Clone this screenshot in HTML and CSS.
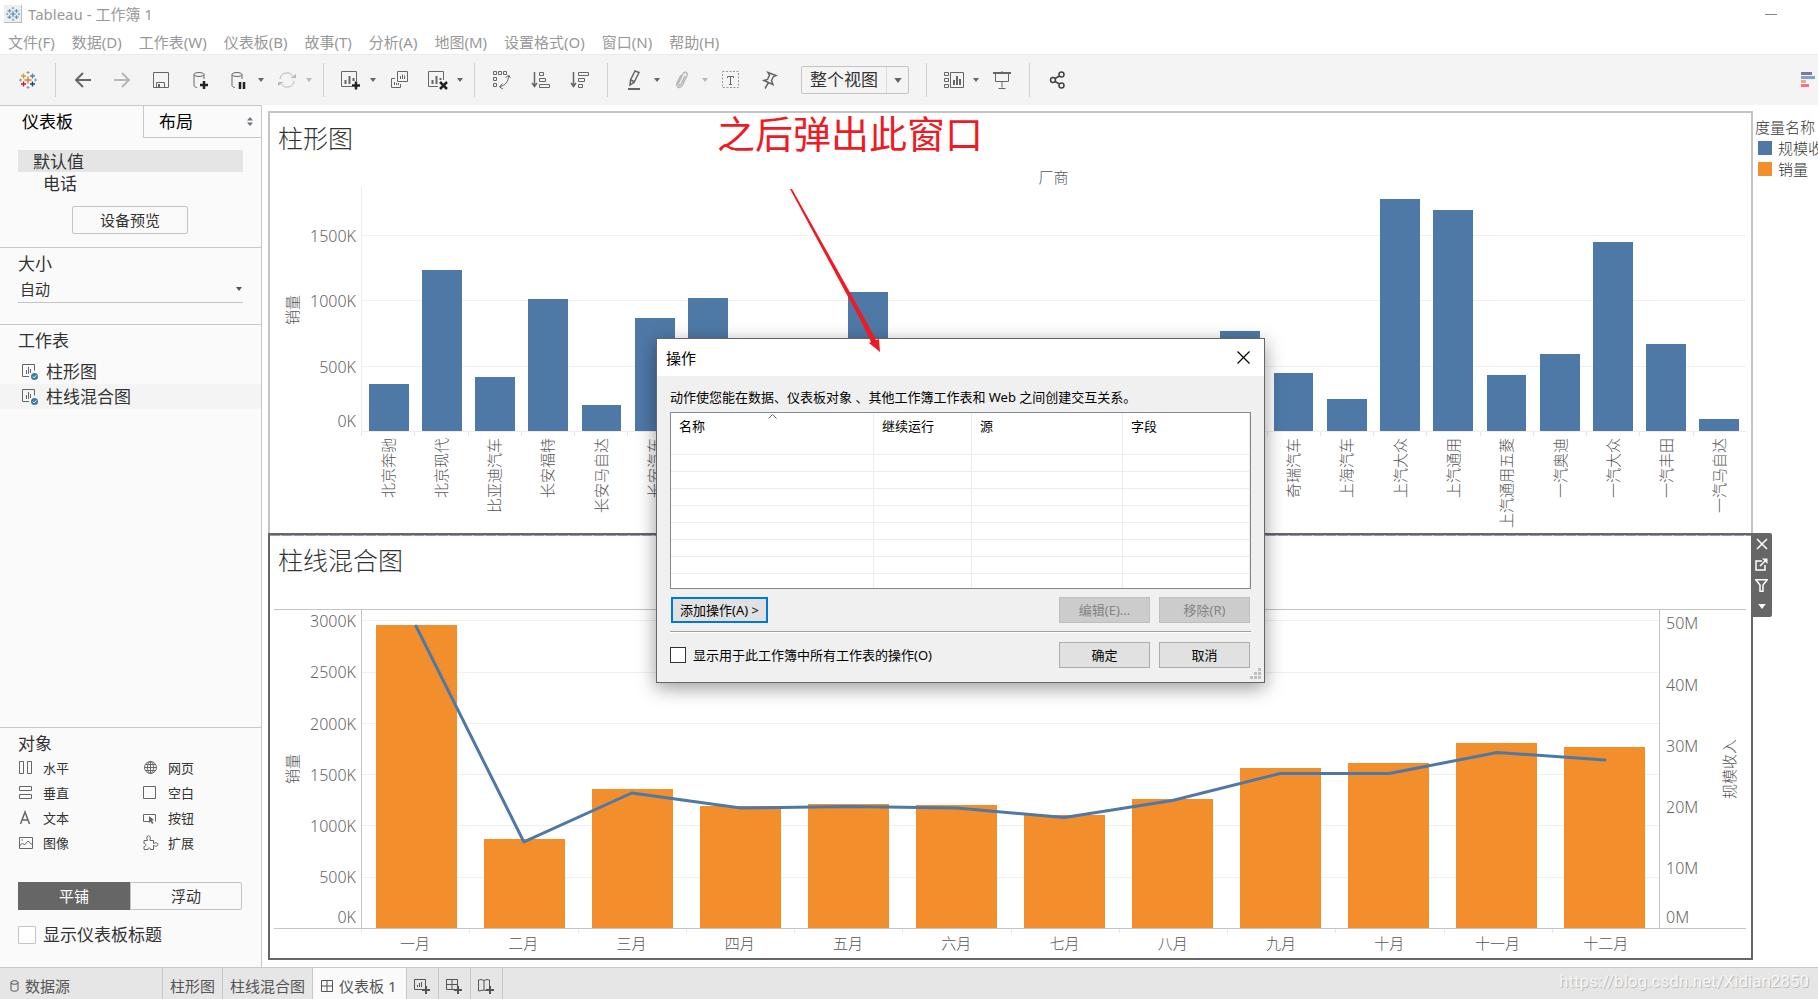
FILE: index.html
```html
<!DOCTYPE html>
<html lang="zh-CN">
<head>
<meta charset="utf-8">
<title>Tableau - 工作簿 1</title>
<link rel="stylesheet" href="styles.css">
</head>
<body>
<svg class="defs" aria-hidden="true">
  <defs>
    <symbol id="caret" viewBox="0 0 6 4"><path d="M0 0h6L3 4z" fill="currentColor"/></symbol>
    <symbol id="logo" viewBox="0 0 18 18">
      <path d="M9 5.500v7M5.500 9h7" stroke="var(--c1)" stroke-width="1.4"/>
      <path d="M4.500 2.500v5M2 5h5" stroke="var(--c2)" stroke-width="1.4"/>
      <path d="M13.500 2.500v5M11 5h5" stroke="var(--c3)" stroke-width="1.4"/>
      <path d="M4.500 10.500v5M2 13h5" stroke="var(--c4)" stroke-width="1.4"/>
      <path d="M13.500 10.500v5M11 13h5" stroke="var(--c5)" stroke-width="1.4"/>
      <path d="M9 0v3M7.500 1.500h3M9 15v3M7.500 16.500h3M1.500 7.500v3M0 9h3M16.500 7.500v3M15 9h3" stroke="var(--c6)"/>
    </symbol>
    <symbol id="sheet" viewBox="0 0 16 16">
      <path d="M7 12.500H.5V.5h12v6" fill="none" stroke="#666"/>
      <path d="M4.500 6v4M6.500 3v7M8.500 5v4" stroke="#666"/>
      <circle cx="12.500" cy="12.500" r="3.500" fill="#3a7ca0"/>
      <path d="M10.800 12.500l1.300 1.300 2.200-2.500" fill="none" stroke="#fff"/>
    </symbol>
  </defs>
</svg>

<div class="app">
  <header class="titlebar">
    <span class="app-icon"><svg class="mono-logo" width="14" height="14"><use href="#logo"/></svg></span>
    <span>Tableau - 工作簿 1</span>
    <button class="minimize" aria-label="最小化"></button>
  </header>

  <nav class="menubar">
    <button>文件(F)</button><button>数据(D)</button><button>工作表(W)</button><button>仪表板(B)</button><button>故事(T)</button><button>分析(A)</button><button>地图(M)</button><button>设置格式(O)</button><button>窗口(N)</button><button>帮助(H)</button>
  </nav>

  <div class="toolbar" role="toolbar">
    <button class="tool" aria-label="起始页"><svg class="color-logo" width="18" height="18"><use href="#logo"/></svg></button>
    <span class="sep"></span>
    <button class="tool" aria-label="撤消"><svg width="18" height="18" viewBox="0 0 18 18"><path d="M17 9H2M9 2L2 9l7 7" class="s2"/></svg></button>
    <button class="tool off" aria-label="重做"><svg width="18" height="18" viewBox="0 0 18 18"><path d="M1 9h15M9 2l7 7-7 7" class="s2"/></svg></button>
    <button class="tool" aria-label="保存"><svg width="18" height="18" viewBox="0 0 18 18"><path d="M1.500 1.500h15v15h-15zM4.500 16.500v-5h8v5" class="s1"/><path d="M6 13h2v3H6z" fill="currentColor"/></svg></button>
    <button class="tool" aria-label="新建数据源"><svg width="18" height="18" viewBox="0 0 18 18"><ellipse cx="8" cy="3.500" rx="5" ry="2" class="s1"/><path d="M3 3.500v11c0 1 1 1.500 3 2M13 3.500V8" class="s1"/><path d="M9 14h8M13 10v8" class="ink"/></svg></button>
    <button class="tool" aria-label="暂停自动更新"><svg width="18" height="18" viewBox="0 0 18 18"><ellipse cx="7" cy="3.500" rx="5" ry="2" class="s1"/><path d="M2 3.500v11c0 1 1 1.500 3 2M12 3.500V8" class="s1"/><path d="M10 11v7M14 11v7" class="ink"/></svg></button>
    <button class="drop" aria-label="更新选项"><svg width="6" height="4"><use href="#caret"/></svg></button>
    <button class="tool off" aria-label="刷新"><svg width="18" height="18" viewBox="0 0 18 18"><path d="M2 8a7 7 0 0 1 12.500-3.500M16 10A7 7 0 0 1 3.500 13.500" class="s1"/><path d="M12.500 7h5.500V3zM5.500 11H0v4z" fill="currentColor"/></svg></button>
    <button class="drop off" aria-label="刷新选项"><svg width="6" height="4"><use href="#caret"/></svg></button>
    <span class="sep"></span>
    <button class="tool" aria-label="新建工作表"><svg width="20" height="20" viewBox="0 0 20 20"><path d="M11 16.500H.5v-15h15V11" class="s1"/><path d="M4.500 10v4M8.500 6v8M12.500 8v3" class="s2"/><path d="M11 15.500h8M15 11.500v8" class="ink"/></svg></button>
    <button class="drop" aria-label="新建选项"><svg width="6" height="4"><use href="#caret"/></svg></button>
    <button class="tool" aria-label="复制工作表"><svg width="18" height="18" viewBox="0 0 18 18"><path d="M7.500.5h10v10h-10zM5 7.500H1.500v9h9V13" class="s1"/><path d="M10.500 5v3M12.500 3.500V8M14.500 4.500V8M4.500 11v3M6.500 12v2M8.500 12v2" class="s1"/></svg></button>
    <button class="tool" aria-label="清除工作表"><svg width="20" height="20" viewBox="0 0 20 20"><path d="M10 16.500H.5v-15h15V10" class="s1"/><path d="M4.500 10v4M8.500 6v8M12.500 8v2" class="s2"/><path d="M12 12l7 7M19 12l-7 7" class="ink"/></svg></button>
    <button class="drop" aria-label="清除选项"><svg width="6" height="4"><use href="#caret"/></svg></button>
    <span class="sep"></span>
    <button class="tool" aria-label="交换行和列"><svg width="20" height="20" viewBox="0 0 20 20"><path d="M1.500 1.500h3v3h-3zM6.500 1.500h3v3h-3zM11.500 1.500h3v3h-3zM1.500 7.500h3v3h-3zM1.500 13.500h3v3h-3z" class="s1"/><path d="M16.500 5.500c0 6-3 10-8.500 11M13.500 8l3-3 2 3M10.500 13.500L7.500 17l3.500 2" class="s1"/></svg></button>
    <button class="tool" aria-label="升序排序"><svg width="20" height="20" viewBox="0 0 20 20"><path d="M3.500 2v14M1 13l2.500 3.500L6 13" class="s2t"/><path d="M8.500 2.500h4v3h-4zM8.500 8.500h6v3h-6zM8.500 14.500h10v3h-10z" class="s1"/></svg></button>
    <button class="tool" aria-label="降序排序"><svg width="20" height="20" viewBox="0 0 20 20"><path d="M3.500 2v14M1 13l2.500 3.500L6 13" class="s2t"/><path d="M8.500 2.500h10v3h-10zM8.500 8.500h6v3h-6zM8.500 14.500h4v3h-4z" class="s1"/></svg></button>
    <span class="sep"></span>
    <button class="tool" aria-label="突出显示"><svg width="18" height="20" viewBox="0 0 18 20"><path d="M9 1l4 1.500-5 10-4 2.500.500-5zM5 10l3.500 2" class="s15"/><path d="M2 19h12" class="s2"/></svg></button>
    <button class="drop" aria-label="突出显示选项"><svg width="6" height="4"><use href="#caret"/></svg></button>
    <button class="tool off" aria-label="组成员"><svg width="18" height="18" viewBox="0 0 18 18"><path d="M11 5l-4 8c-1 2-3 1-2.500-1L9 3c1.500-3 5-1.500 4 1.500L8.500 14c-2 4-7 2.500-5.500-2L7 4" class="s15"/></svg></button>
    <button class="drop off" aria-label="组选项"><svg width="6" height="4"><use href="#caret"/></svg></button>
    <button class="tool" aria-label="显示标记标签"><svg width="18" height="18" viewBox="0 0 18 18"><path d="M.5.500h16v16H.5z" fill="none" stroke="#999" stroke-dasharray="2 1.500"/><path d="M5.500 7V5.500h6V7M8.500 5.500v8M7 13.500h3" class="s1"/></svg></button>
    <button class="tool" aria-label="固定轴"><svg width="18" height="18" viewBox="0 0 18 18"><path d="M7 1.500l8 3-2.500 1-2 4 1.500 4-9-4 3.500-1 2-4.500zM7.500 11.500L4 17.500" class="s15"/></svg></button>
    <label class="fit"><select aria-label="适合"><option>整个视图</option></select><span class="fit-arrow"><svg width="8" height="5"><use href="#caret"/></svg></span></label>
    <span class="sep"></span>
    <button class="tool" aria-label="显示卡"><svg width="20" height="18" viewBox="0 0 20 18"><path d="M.5 1.500h4v3h-4zM.5 7.500h4v3h-4zM.5 13.500h4v3h-4zM6.500 1.500h13v15h-13z" class="s1"/><path d="M10 9v5M13 5v9M16 8v6" class="s2"/></svg></button>
    <button class="drop" aria-label="卡选项"><svg width="6" height="4"><use href="#caret"/></svg></button>
    <button class="tool" aria-label="演示模式"><svg width="18" height="18" viewBox="0 0 18 18"><path d="M0 2h18" class="s2"/><path d="M9 0v2M2.500 3v7.500h13V3M9 10.500v6M5.500 17.500h7" class="s1"/></svg></button>
    <span class="sep"></span>
    <button class="tool dark" aria-label="共享"><svg width="18" height="18" viewBox="0 0 18 18"><circle cx="5" cy="9" r="2.500" class="s15"/><circle cx="13.500" cy="3.500" r="2.500" class="s15"/><circle cx="13.500" cy="14.500" r="2.500" class="s15"/><path d="M7 7.500l4.500-2.500M7 10.500l4.500 2.500" class="s15"/></svg></button>
    <button class="tool showme" aria-label="智能显示"><svg width="14" height="16" viewBox="0 0 14 16"><path d="M0 0h11v3H0z" fill="#8074a0"/><path d="M0 4h14v3H0z" fill="#7ba3cf"/><path d="M0 8h5v3H0z" fill="#f4a582"/><path d="M0 12h8v3H0z" fill="#fb6f84"/></svg></button>
  </div>

  <main class="body">
    <aside class="side">
      <div class="tabs">
        <button class="tab on">仪表板</button>
        <button class="tab">布局<svg width="6" height="9" viewBox="0 0 6 9"><path d="M0 3.500h6L3 0zM0 5.500h6L3 9z" fill="#6b7580"/></svg></button>
      </div>
      <section class="devices">
        <div class="device on">默认值</div>
        <div class="device sub">电话</div>
        <button class="preview">设备预览</button>
      </section>
      <section class="size">
        <label for="size">大小</label>
        <div class="size-box"><select id="size"><option>自动</option></select><svg width="8" height="4"><use href="#caret"/></svg></div>
      </section>
      <section class="sheets">
        <h2>工作表</h2>
        <div class="sheet"><svg width="16" height="16"><use href="#sheet"/></svg>柱形图</div>
        <div class="sheet on"><svg width="16" height="16"><use href="#sheet"/></svg>柱线混合图</div>
      </section>
      <section class="objects">
        <h2>对象</h2>
        <div class="object-grid">
          <div class="object"><svg width="16" height="16" viewBox="0 0 16 16"><path d="M1.500 1.500h4v12h-4zM9.500 1.500h4v12h-4z" class="s1"/></svg>水平</div>
          <div class="object"><svg width="16" height="16" viewBox="0 0 16 16"><circle cx="7.500" cy="7.500" r="6" class="s1"/><ellipse cx="7.500" cy="7.500" rx="3" ry="6" class="s1"/><path d="M7.500 1.500v12M1.500 7.500h12M2.500 4.500h10M2.500 10.500h10" class="s1"/></svg>网页</div>
          <div class="object"><svg width="16" height="16" viewBox="0 0 16 16"><path d="M1.500 1.500h12v4h-12zM1.500 9.500h12v4h-12z" class="s1"/></svg>垂直</div>
          <div class="object"><svg width="16" height="16" viewBox="0 0 16 16"><path d="M.5 1.500h12v12H.5z" class="s1"/></svg>空白</div>
          <div class="object"><svg width="16" height="16" viewBox="0 0 16 16"><path d="M2.500 14L7 2l4.500 12M4 10h6" class="s15"/></svg>文本</div>
          <div class="object"><svg width="16" height="16" viewBox="0 0 16 16"><path d="M6 11.500H.5v-7h12v7" class="s1"/><path d="M6 6l5 4-2 .5 1.500 2.500-1.500 1-1.300-2.500L6 13z" fill="currentColor"/></svg>按钮</div>
          <div class="object"><svg width="16" height="16" viewBox="0 0 16 16"><path d="M1.500 2.500h13v11h-13zM1.500 11l3-3 2 2 3.500-4 4.500 4M3.500 5h1.500" class="s1"/></svg>图像</div>
          <div class="object"><svg width="16" height="16" viewBox="0 0 16 16"><path d="M1 5.500h3.500C3 2.500 4 .8 5.500.8S8 2.500 7 5.500h3.500v3c2.500-1.500 4.500-.5 4.500 1s-2 2.500-4.500 1v4H7.500c.5-2-3-2-2.500 0H1v-3c2.500 0 2.500-3 0-3z" class="s1"/></svg>扩展</div>
        </div>
        <div class="mode"><button class="on">平铺</button><button>浮动</button></div>
        <label class="show-title"><input type="checkbox">显示仪表板标题</label>
      </section>
    </aside>

    <div class="canvas">
      <div class="views">
        <section class="view">
          <h1>柱形图</h1>
          <div class="chart">
            <div class="col-title">厂商</div>
            <div class="axis-title">销量</div>
            <div class="ticks ticks-a"><span>1500K</span><span>1000K</span><span>500K</span><span>0K</span></div>
            <div class="plot">
              <svg class="lines" viewBox="0 0 1385 244" preserveAspectRatio="none"><path d="M0 48.500h1385M0 113.500h1385M0 179.500h1385"/></svg>
              <div class="bars blue">
                <i style="height:19.3%"></i><i style="height:66%"></i><i style="height:22.1%"></i><i style="height:54.1%"></i><i style="height:10.7%"></i><i style="height:46.3%"></i><i style="height:54.5%"></i><i style="height:5%"></i><i style="height:5%"></i><i style="height:57%"></i><i style="height:10%"></i><i style="height:10%"></i><i style="height:10%"></i><i style="height:10%"></i><i style="height:10%"></i><i style="height:10%"></i><i style="height:41%"></i><i style="height:23.8%"></i><i style="height:13.1%"></i><i style="height:95.1%"></i><i style="height:90.6%"></i><i style="height:23%"></i><i style="height:31.6%"></i><i style="height:77.5%"></i><i style="height:35.7%"></i><i style="height:4.9%"></i>
              </div>
            </div>
            <div class="cats upright">
              <span><b>北京奔驰</b></span><span><b>北京现代</b></span><span><b>比亚迪汽车</b></span><span><b>长安福特</b></span><span><b>长安马自达</b></span><span><b>长安汽车</b></span><span></span><span></span><span></span><span></span><span></span><span></span><span></span><span></span><span></span><span></span><span></span><span><b>奇瑞汽车</b></span><span><b>上海汽车</b></span><span><b>上汽大众</b></span><span><b>上汽通用</b></span><span><b>上汽通用五菱</b></span><span><b>一汽奥迪</b></span><span><b>一汽大众</b></span><span><b>一汽丰田</b></span><span><b>一汽马自达</b></span>
            </div>
          </div>
        </section>

        <section class="view selected">
          <h1>柱线混合图</h1>
          <div class="chart dual">
            <div class="axis-title">销量</div>
            <div class="ticks ticks-b"><span>3000K</span><span>2500K</span><span>2000K</span><span>1500K</span><span>1000K</span><span>500K</span><span>0K</span></div>
            <div class="plot">
              <svg class="lines" viewBox="0 0 1298 318" preserveAspectRatio="none"><path d="M0 10.500h1298M0 62.500h1298M0 113.500h1298M0 164.500h1298M0 215.500h1298M0 267.500h1298"/></svg>
              <div class="bars orange">
                <i style="height:95.3%"></i><i style="height:28%"></i><i style="height:43.7%"></i><i style="height:38.4%"></i><i style="height:39%"></i><i style="height:38.7%"></i><i style="height:35.5%"></i><i style="height:40.6%"></i><i style="height:50.3%"></i><i style="height:51.9%"></i><i style="height:58.2%"></i><i style="height:56.9%"></i>
              </div>
              <svg class="trend" viewBox="0 0 1298 318" preserveAspectRatio="none"><path d="M54 16L162 232L270 183L379 198L487 196.500L595 198L703 207.500L811 190.500L919 163.500L1028 163.500L1136 142.500L1244 150"/></svg>
            </div>
            <div class="ticks ticks-c"><span>50M</span><span>40M</span><span>30M</span><span>20M</span><span>10M</span><span>0M</span></div>
            <div class="axis-title right">规模收入</div>
            <div class="cats">
              <span>一月</span><span>二月</span><span>三月</span><span>四月</span><span>五月</span><span>六月</span><span>七月</span><span>八月</span><span>九月</span><span>十月</span><span>十一月</span><span>十二月</span>
            </div>
          </div>
          <div class="view-tools">
            <button aria-label="移除"><svg width="12" height="12" viewBox="0 0 12 12"><path d="M1 1l10 10M11 1L1 11"/></svg></button>
            <button aria-label="转到工作表"><svg width="13" height="13" viewBox="0 0 13 13"><path d="M7 3H1v9h9V7M5 8l6-6"/><path d="M7 .5h5.500V6z" class="solid"/></svg></button>
            <button aria-label="筛选器"><svg width="13" height="13" viewBox="0 0 13 13"><path d="M.8.800h11.400L8 6v6.200H5V6z"/></svg></button>
            <button aria-label="更多选项"><svg width="8" height="5"><use href="#caret"/></svg></button>
          </div>
        </section>
      </div>

      <div class="legend">
        <div>度量名称</div>
        <div class="key"><i class="blue-key"></i>规模收入</div>
        <div class="key"><i class="orange-key"></i>销量</div>
      </div>
    </div>
  </main>

  <footer class="sheetbar">
    <button class="source"><svg width="9" height="12" viewBox="0 0 9 12"><ellipse cx="4.500" cy="2.500" rx="3.500" ry="1.800" class="s1"/><path d="M1 2.500v7.500c0 1.500 7 1.500 7 0V2.500" class="s1"/></svg>数据源</button>
    <button>柱形图</button>
    <button>柱线混合图</button>
    <button class="on"><svg width="12" height="12" viewBox="0 0 12 12"><path d="M.5.500h11v11H.5zM6 .5v11M.5 6h11" class="s1"/></svg>仪表板 1</button>
    <button class="add" aria-label="新建工作表"><svg width="16" height="16" viewBox="0 0 16 16"><path d="M8 11.500H.5V1.500h11V8" class="s1"/><path d="M3.500 7v2M5.500 5v4M7.500 4v5" class="s1"/><path d="M8 12h8M12 8v8" class="s2"/></svg></button>
    <button class="add" aria-label="新建仪表板"><svg width="16" height="16" viewBox="0 0 16 16"><path d="M8 11.500H.5V1.500h11V8M6 1.500v10M.5 6.500h11" class="s1"/><path d="M8 12h8M12 8v8" class="s2"/></svg></button>
    <button class="add" aria-label="新建故事"><svg width="16" height="16" viewBox="0 0 16 16"><path d="M8 12.500L6 12l-5.500 1V2L3 1.500l3 1 3-1 2.500.5v6M6 2.500V12" class="s1"/><path d="M8 12h8M12 8v8" class="s2"/></svg></button>
    <span class="watermark">https://blog.csdn.net/Xidian2850</span>
  </footer>

  <div class="dialog" role="dialog" aria-labelledby="dlg-title">
    <header><h2 id="dlg-title">操作</h2><button aria-label="关闭"><svg width="13" height="13" viewBox="0 0 13 13"><path d="M.5.500l12 12M12.500.500l-12 12" stroke="#000" stroke-width="1.200"/></svg></button></header>
    <div class="dialog-body">
      <p>动作使您能在数据、仪表板对象 、其他工作簿工作表和 Web 之间创建交互关系。</p>
      <table>
        <colgroup><col class="c-name"><col class="c-run"><col class="c-src"><col></colgroup>
        <thead><tr><th class="sorted"><svg width="9" height="5" viewBox="0 0 9 5"><path d="M.5 4.500l4-4 4 4" fill="none" stroke="#666"/></svg>名称</th><th>继续运行</th><th>源</th><th>字段</th></tr></thead>
        <tbody>
          <tr><td></td><td></td><td></td><td></td></tr><tr><td></td><td></td><td></td><td></td></tr><tr><td></td><td></td><td></td><td></td></tr><tr><td></td><td></td><td></td><td></td></tr><tr><td></td><td></td><td></td><td></td></tr><tr><td></td><td></td><td></td><td></td></tr><tr><td></td><td></td><td></td><td></td></tr><tr><td></td><td></td><td></td><td></td></tr><tr><td></td><td></td><td></td><td></td></tr>
        </tbody>
      </table>
      <div class="row"><button class="btn focus">添加操作(A) &gt;</button><span class="grow"></span><button class="btn" disabled>编辑(E)...</button><button class="btn" disabled>移除(R)</button></div>
      <hr>
      <div class="row check-row"><label><input type="checkbox">显示用于此工作簿中所有工作表的操作(O)</label><span class="grow"></span><button class="btn">确定</button><button class="btn">取消</button></div>
    </div>
    <svg class="grip" width="11" height="11" viewBox="0 0 11 11"><path d="M8 0h3v3H8zM8 4h3v3H8zM8 8h3v3H8zM4 4h3v3H4zM4 8h3v3H4zM0 8h3v3H0z" fill="#bfbfbf"/></svg>
  </div>

  <div class="note">之后弹出此窗口</div>
  <svg class="arrow" width="92" height="164" viewBox="0 0 92 164"><path d="M0 0L2 0L75.500 131L86 151L89 150L90 163L79 154L81 153L70.500 131z" fill="#ed1c24"/></svg>
</div>
</body>
</html>
```
FILE: styles.css
```css
* { box-sizing: border-box; }
body {
  margin: 0;
  font-family: "Noto Sans", "Noto Sans CJK SC", sans-serif;
  font-size: 15px;
  line-height: 20px;
  color: #333;
  background: #fff;
}
button, select, input { font: inherit; color: inherit; margin: 0; }
button { background: none; border: 0; padding: 0; white-space: nowrap; }
h1, h2, p { margin: 0; font-weight: 400; }
svg { display: block; flex: none; }
.defs { position: absolute; width: 0; height: 0; }
.s1, .s2, .s2t, .s15 { fill: none; stroke: currentColor; }
.s2 { stroke-width: 2; }
.s2t, .s15 { stroke-width: 1.5; }
.ink { fill: none; stroke: #222; stroke-width: 2.5; }

.app { position: relative; display: flex; flex-direction: column; height: 100vh; overflow: hidden; }

.titlebar { display: flex; align-items: center; height: 28px; padding: 0 41px 0 4px; gap: 6px; color: #999; flex: none; }
.app-icon { display: grid; place-items: center; width: 18px; height: 18px; background: #eee; border-right: 1px solid #bbb; border-bottom: 1px solid #bbb; }
.mono-logo { --c1: #3e82a8; --c2: #5a9ac0; --c3: #5a9ac0; --c4: #5a9ac0; --c5: #5a9ac0; --c6: #5a9ac0; }
.color-logo { --c1: #e8762c; --c2: #eb912c; --c3: #59879b; --c4: #c72035; --c5: #1f457e; --c6: #7b9bb5; }
.minimize { margin-left: auto; width: 12px; height: 1px; background: #888; }

.menubar { display: flex; gap: 17px; height: 26px; padding: 2px 8px 0; color: #999; flex: none; }

.toolbar { display: flex; align-items: center; height: 51px; padding-left: 8px; background: #f4f4f4; border-top: 1px solid #ebebeb; color: #666; flex: none; }
.tool { display: grid; place-items: center; width: 39px; height: 32px; flex: none; }
.drop { display: grid; place-items: center; width: 12px; height: 32px; margin-left: -3px; flex: none; }
.off { color: #b8b8b8; }
.dark { color: #444; }
.sep { width: 1px; height: 34px; margin: 0 7px 0 8px; background: #d0d0d0; flex: none; }
.fit { position: relative; display: flex; margin: 0 9px 0 12px; }
.fit select { appearance: none; width: 108px; height: 28px; padding: 0 0 0 8px; border: 1px solid #c4c4c4; border-radius: 2px; background: #f4f4f4; color: #333; font-size: 17px; }
.fit-arrow { position: absolute; top: 1px; right: 1px; bottom: 1px; width: 22px; display: grid; place-items: center; border-left: 1px solid #dcdcdc; pointer-events: none; }
.showme { margin-left: auto; width: 17px; justify-items: start; }

.body { display: flex; flex: 1; min-height: 0; }
.side { display: flex; flex-direction: column; width: 262px; flex: none; background: #fafafa; border-right: 1px solid #c8c8c8; border-top: 1px solid #c8c8c8; }
.tabs { display: flex; height: 32px; font-size: 17px; color: #000; }
.tab { width: 143px; padding-left: 22px; text-align: left; }
.tab:last-child { display: flex; align-items: center; justify-content: space-between; flex: 1; padding: 0 8px 0 15px; border-left: 1px solid #c8c8c8; border-bottom: 1px solid #c8c8c8; }
.devices { display: flex; flex-direction: column; height: 110px; padding: 12px 18px 0; border-bottom: 1px solid #c8c8c8; font-size: 17px; }
.device { height: 22px; padding-left: 15px; line-height: 24px; }
.device.on { background: #e5e5e5; }
.device.sub { padding-left: 25px; }
.preview { width: 116px; height: 28px; margin: 12px 0 0 54px; border: 1px solid #c4c4c4; border-radius: 2px; font-size: 15px; }
.size { height: 77px; padding: 5px 18px 0; border-bottom: 1px solid #c8c8c8; }
.size label, .side h2 { display: block; font-size: 17px; line-height: 22px; }
.size-box { display: flex; align-items: center; height: 28px; border-bottom: 1px solid #c4c4c4; color: #555; }
.size-box select { appearance: none; flex: 1; border: 0; padding: 0 0 0 2px; background: none; color: #333; }
.sheets { padding-top: 5px; }
.side .sheets h2 { padding-left: 18px; margin-bottom: 7px; }
.sheet { display: flex; align-items: center; gap: 8px; height: 25px; padding-left: 22px; font-size: 17px; }
.sheet.on { background: #f4f4f4; }
.objects { margin-top: auto; height: 240px; padding: 5px 19px 0 18px; border-top: 1px solid #c8c8c8; }
.object-grid { display: grid; grid-template-columns: 125px 1fr; grid-auto-rows: 25px; font-size: 13px; }
.object { display: flex; align-items: center; gap: 9px; color: #333; }
.object svg { color: #666; }
.mode { display: flex; height: 28px; margin-top: 27px; }
.mode button { flex: 1; border: 1px solid #c4c4c4; border-radius: 0 2px 2px 0; }
.mode .on { background: #666; border-color: #666; border-radius: 0; color: #fff; }
.show-title { display: flex; align-items: center; gap: 7px; margin-top: 15px; font-size: 17px; }
input[type="checkbox"] { appearance: none; width: 18px; height: 18px; border: 1px solid #c4c4c4; border-radius: 1px; background: #fff; flex: none; }

.canvas { display: flex; flex: 1; min-width: 0; padding: 6px 0 7px 6px; }
.views { display: flex; flex-direction: column; flex: 1; min-width: 0; font-weight: 300; }
.view { position: relative; display: flex; flex-direction: column; flex: 423 1 0; min-height: 0; padding: 0 5px 0 4px; border: 2px solid #c4c4c4; border-bottom: 0; }
.view.selected { flex-grow: 426; border: 2px solid #666; background: repeating-linear-gradient(90deg, #8f9cba 0 10px, #c9c4c8 10px 12px) top / 100% 1px no-repeat; }
.view h1 { height: 51px; padding-left: 4px; font-size: 25px; line-height: 50px; font-weight: 300; }
.selected h1 { height: 74px; }
.chart { display: grid; flex: 1; min-height: 0; grid-template: 23px 1fr 101px / 36px 51px 1fr; color: #555; }
.chart.dual { grid-template: 1fr 30px / 36px 51px 1fr 86px; border-top: 1px solid #c4c4c4; }
.col-title { grid-area: 1 / 3; text-align: center; line-height: 26px; }
.axis-title { grid-row: 2; grid-column: 1; place-self: center; writing-mode: vertical-rl; text-orientation: sideways; transform: rotate(180deg); }
.dual .axis-title { grid-row: 1; }
.dual .right { grid-column: 4; justify-self: end; padding-left: 7px; }
.ticks { grid-row: 2; grid-column: 2; display: grid; padding-right: 8px; text-align: right; font-size: 16px; line-height: 22px; color: #666; }
.dual .ticks { grid-row: 1; }
.ticks span { align-self: center; }
.ticks span:last-child { align-self: end; }
.ticks-a { grid-template-rows: 65fr 65fr 66fr 32fr; padding-top: 16px; }
.ticks-b { grid-template-rows: 36fr 52fr 51fr 51fr 51fr 51fr 26fr; }
.dual .ticks-c { grid-column: 4; grid-template-rows: 44fr 61fr 61fr 61fr 61fr 30fr; padding: 0 0 0 6px; text-align: left; }
.ticks-b span:first-child { align-self: start; }
.ticks-c span:first-child { align-self: start; padding-top: 2px; }
.plot { grid-area: 2 / 3; display: grid; min-height: 0; border-left: 1px solid #ececec; border-bottom: 1px solid #ececec; }
.dual .plot { grid-area: 1 / 3; border: 1px solid #c4c4c4; border-top: 0; border-bottom: 0; }
.plot > * { grid-area: 1 / 1; width: 100%; height: 100%; min-height: 0; }
.lines path { fill: none; stroke: #f0f0f0; vector-effect: non-scaling-stroke; }
.trend path { fill: none; stroke: #4e79a7; stroke-width: 3; stroke-linejoin: round; stroke-linecap: round; vector-effect: non-scaling-stroke; }
.bars { display: grid; grid-auto-flow: column; grid-auto-columns: 1fr; grid-template-rows: 100%; align-items: end; justify-items: center; }
.bars i { width: 75%; }
.blue i, .blue-key { background: #4e79a7; }
.orange i, .orange-key { background: #f28e2b; }
.cats { grid-area: 3 / 3; display: grid; grid-auto-flow: column; grid-auto-columns: 1fr; }
.dual .cats { grid-area: 2 / 1 / 3 / 5; padding: 0 86px 0 87px; border-top: 1px solid #c4c4c4; }
.cats span { display: flex; justify-content: center; align-items: flex-start; padding-top: 4px; background: linear-gradient(#e6e6e6, #e6e6e6) left top / 1px 4px no-repeat; }
.upright span { padding-top: 6px; }
.cats b { font-weight: 300; writing-mode: vertical-rl; text-orientation: sideways; transform: rotate(180deg); }
.view-tools { position: absolute; z-index: 1; top: -2px; right: -21px; display: grid; grid-auto-rows: 21px; width: 21px; height: 84px; background: #666; border-radius: 0 2px 2px 0; color: #fff; }
.view-tools button { display: grid; place-items: center; }
.view-tools path { fill: none; stroke: #fff; stroke-width: 1.5; }
.view-tools .solid { fill: #fff; stroke: none; }

.legend { width: 65px; flex: none; padding: 6px 0 0 2px; overflow: hidden; white-space: nowrap; font-weight: 300; }
.key { display: flex; align-items: center; height: 21px; gap: 6px; padding: 1px 0 0 3px; }
.key i { width: 14px; height: 14px; flex: none; }

.sheetbar { display: flex; height: 32px; flex: none; background: #e6e6e6; border-top: 1px solid #c8c8c8; color: #555; }
.sheetbar button { display: flex; align-items: center; justify-content: center; gap: 6px; padding: 4px 7px 0; border-right: 1px solid #c8c8c8; }
.sheetbar .source { width: 163px; justify-content: flex-start; padding-left: 10px; }
.sheetbar .on { background: #fafafa; padding: 4px 9px 0 8px; }
.sheetbar .add { width: 32px; }
.watermark { margin: 1px 9px 0 auto; font: 17px/24px Roboto, sans-serif; color: #f6f6f6; text-shadow: 1px 1px 1px #b5b5b5; }

.dialog { position: absolute; left: 656px; top: 338px; width: 609px; background: #f0f0f0; border: 1px solid #666; box-shadow: 0 5px 18px rgba(0, 0, 0, .4); font-size: 13px; line-height: 18px; color: #000; }
.dialog header { display: flex; align-items: center; justify-content: space-between; height: 37px; padding: 0 14px 0 9px; background: #fff; }
.dialog h2 { font-size: 15px; }
.dialog-body { padding: 12px 13px 14px; }
.dialog table { width: 100%; margin-top: 6px; table-layout: fixed; border-spacing: 0; border: 1px solid #828790; background: #fff; }
.c-name { width: 203px; }
.c-run { width: 98px; }
.c-src { width: 151px; }
.dialog th { height: 25px; padding: 0 0 0 8px; border-right: 1px solid #ececec; font-weight: 400; text-align: left; }
.dialog td { height: 17px; padding: 0; border-right: 1px solid #ececec; border-bottom: 1px solid #ececec; }
.dialog tr:last-child td { height: 14px; border-bottom: 0; }
.sorted { position: relative; }
.sorted svg { position: absolute; top: 1px; left: 97px; }
.row { display: flex; align-items: center; gap: 9px; padding: 0 1px; }
.check-row { padding-left: 0; }
.grow { flex: 1; }
.dialog table + .row { margin-top: 8px; }
.btn { width: 91px; height: 26px; background: #e1e1e1; border: 1px solid #adadad; }
.btn.focus { width: 97px; border: 2px solid #0078d7; }
.btn:disabled { background: #ccc; border-color: #bfbfbf; color: #838383; }
.dialog hr { height: 2px; margin: 8px 0 9px; border: 0; border-top: 1px solid #a0a0a0; background: #fff; }
.dialog label { display: flex; align-items: center; gap: 7px; }
.dialog input[type="checkbox"] { width: 16px; height: 16px; border-color: #333; border-radius: 0; }
.grip { position: absolute; right: 3px; bottom: 3px; }

.note { position: absolute; left: 717px; top: 108px; font-size: 38px; line-height: 50px; color: #ed1c24; }
.arrow { position: absolute; left: 790px; top: 189px; }
```
